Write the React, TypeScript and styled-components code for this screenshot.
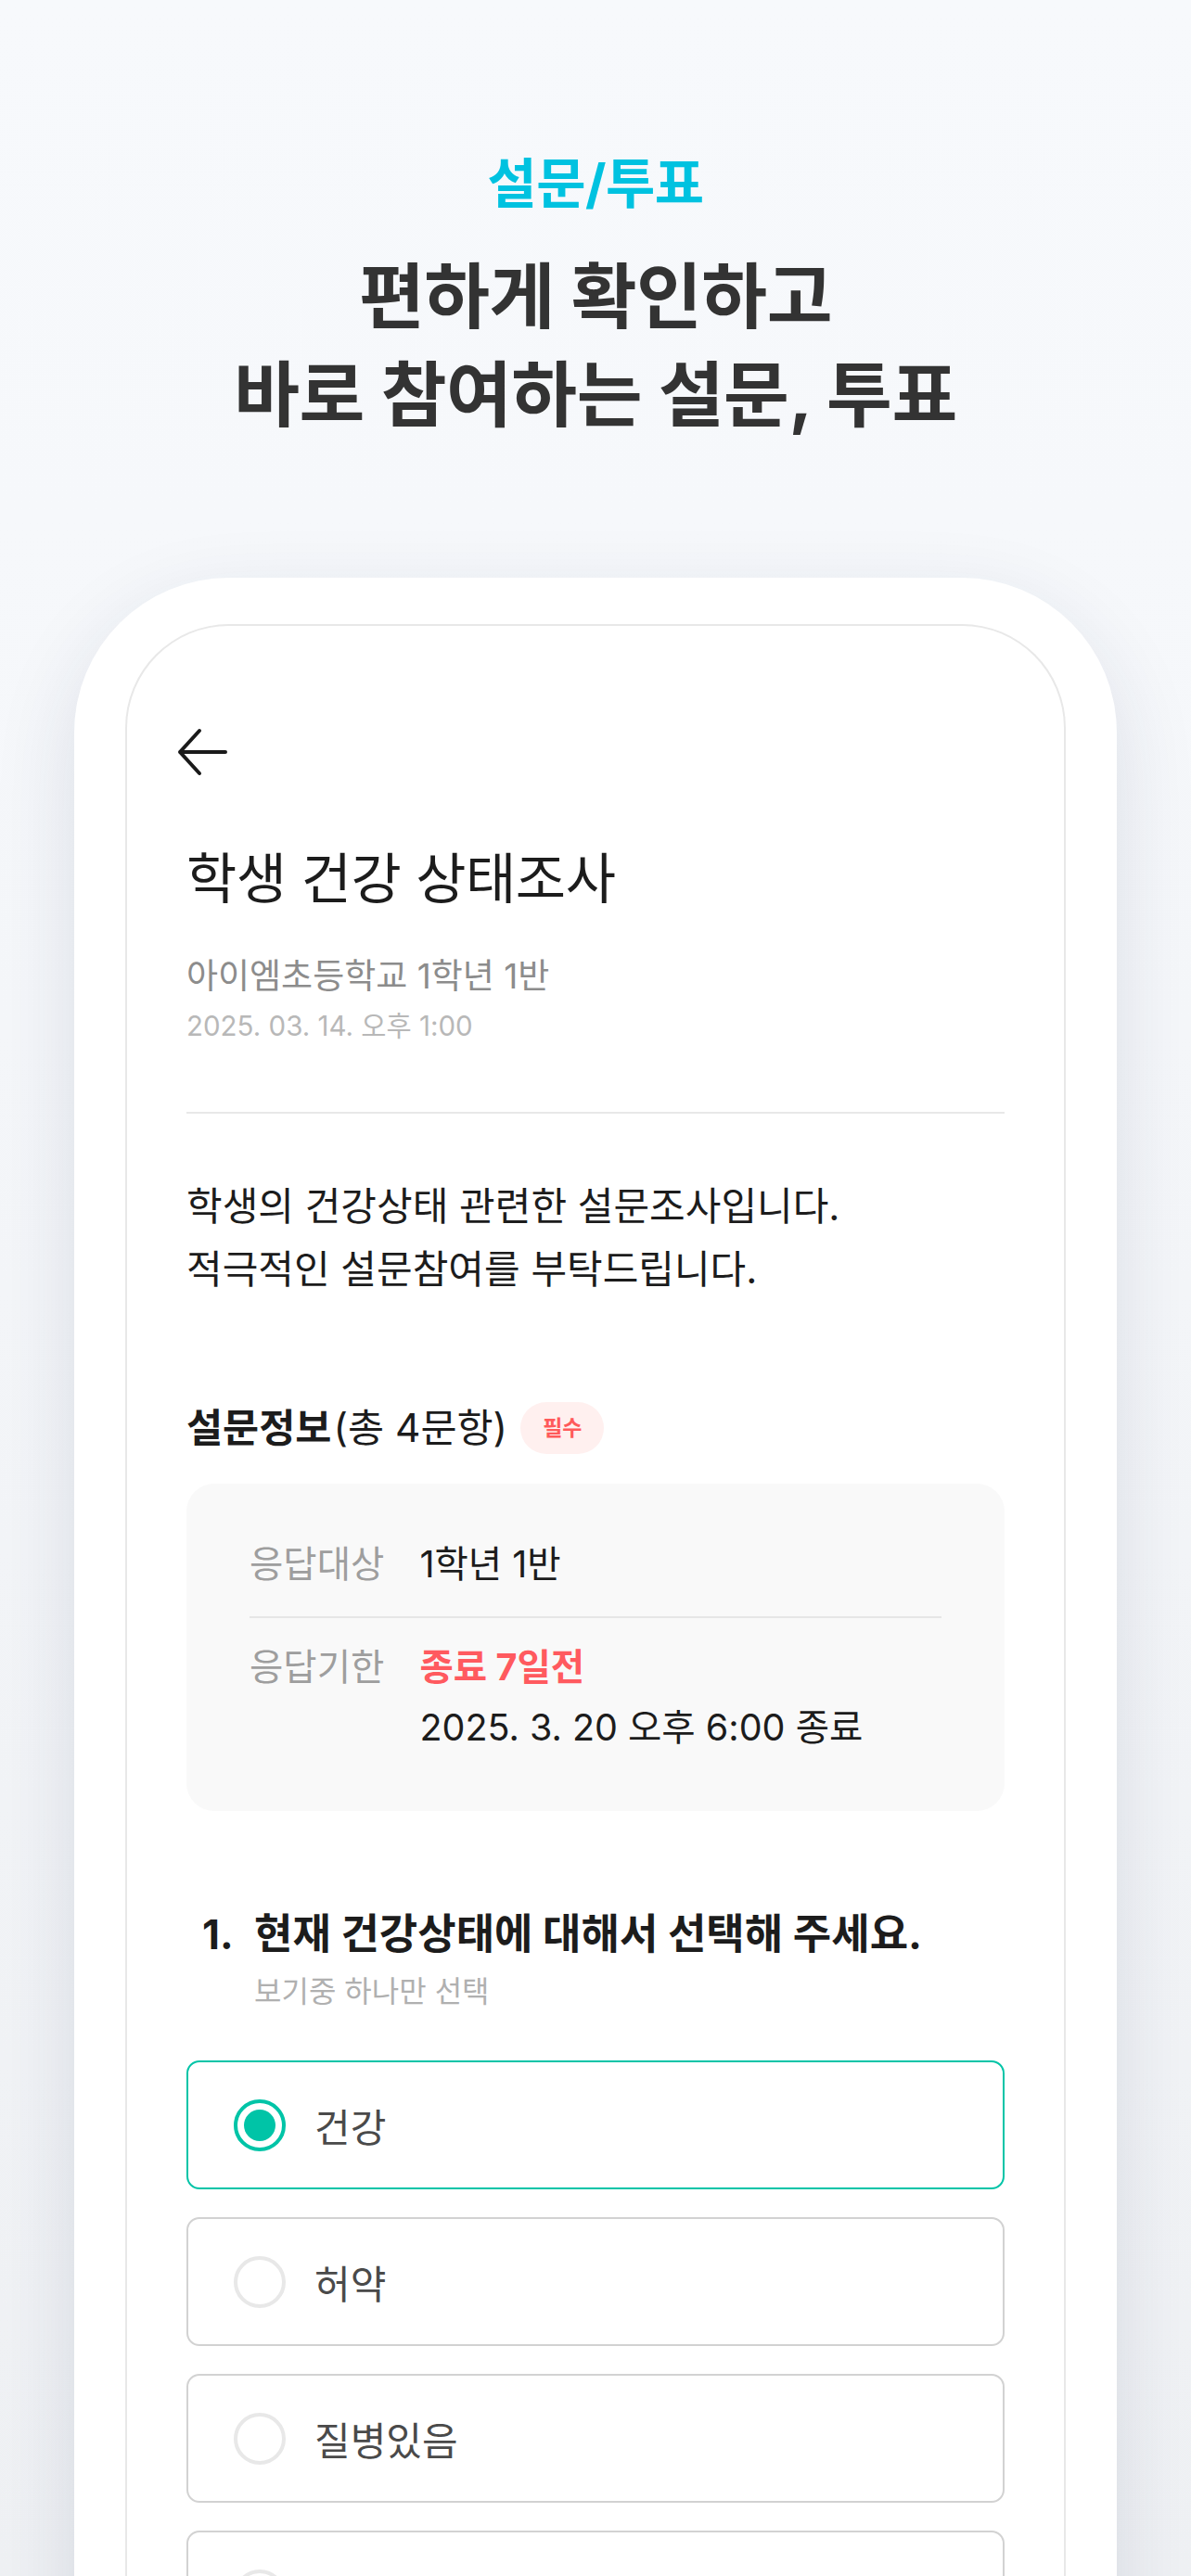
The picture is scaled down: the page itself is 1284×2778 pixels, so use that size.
import * as React from 'react';
import styled, { createGlobalStyle } from 'styled-components';

const GlobalStyle = createGlobalStyle`
  html, body {
    margin: 0;
    padding: 0;
  }
  body {
    background: #f7f9fc;
    font-family: Inter, "Noto Sans CJK KR", "Noto Sans", sans-serif;
    color: #1c1c1c;
    -webkit-font-smoothing: antialiased;
  }
`;

const Page = styled.div`
  height: 100vh;
  overflow: hidden;
  display: flex;
  flex-direction: column;
  align-items: center;
  padding-top: 162px;
  box-sizing: border-box;
  background: linear-gradient(180deg, #f7f9fc 0%, #f5f7fa 40%, #eff1f4 100%);
`;

const Eyebrow = styled.div`
  font-size: 58px;
  line-height: 72px;
  font-weight: 700;
  color: #00c2e0;
  letter-spacing: -0.5px;
`;

const Headline = styled.h1`
  margin: 33px 0 0;
  font-size: 77px;
  line-height: 106px;
  font-weight: 700;
  color: #333333;
  text-align: center;
  letter-spacing: -0.5px;
`;

const Phone = styled.div`
  margin-top: 144px;
  width: 1124px;
  flex: 1;
  display: flex;
  flex-direction: column;
  background: #ffffff;
  border-radius: 167px 167px 0 0;
  padding: 50px 55px 0;
  box-sizing: border-box;
  box-shadow: 0 30px 90px rgba(30, 40, 80, 0.12);
`;

const Screen = styled.div`
  flex: 1;
  border: 2px solid #e8e8e8;
  border-bottom: none;
  border-radius: 112px 112px 0 0;
  padding: 108px 64px 0;
  box-sizing: border-box;
`;

const BackButton = styled.button`
  display: block;
  width: 56px;
  height: 56px;
  margin-left: -12px;
  padding: 0;
  border: none;
  background: none;
`;

const Title = styled.h2`
  margin: 70px 0 0;
  font-size: 59px;
  line-height: 78px;
  font-weight: 400;
  color: #1c1c1c;
  letter-spacing: -0.5px;
`;

const School = styled.div`
  margin-top: 42px;
  font-size: 37px;
  line-height: 48px;
  color: #8c8c8c;
`;

const Posted = styled.div`
  margin-top: 9px;
  font-size: 29.5px;
  line-height: 40px;
  color: #b8b8b8;
`;

const Divider = styled.hr<{ $inset?: boolean }>`
  margin: ${(p) => (p.$inset ? '23px 0 21px' : '73px 0 0')};
  height: 2px;
  border: none;
  background: ${(p) => (p.$inset ? '#e6e6e6' : '#e8e8e8')};
`;

const Description = styled.p`
  margin: 66px 0 0;
  font-size: 42px;
  line-height: 68px;
  color: #1c1c1c;
`;

const SectionHead = styled.div`
  margin-top: 109px;
  height: 56px;
  display: flex;
  align-items: center;
  font-size: 42.5px;
  line-height: 56px;
`;

const SectionName = styled.span`
  font-weight: 700;
  color: #1c1c1c;
`;

const SectionCount = styled.span`
  color: #1c1c1c;
  margin-left: 2px;
`;

const Badge = styled.span`
  margin-left: 14px;
  height: 56px;
  padding: 0 24px;
  display: inline-flex;
  align-items: center;
  border-radius: 28px;
  background: #fff0ef;
  color: #ff5a5a;
  font-size: 23px;
  font-weight: 700;
`;

const InfoBox = styled.div`
  margin-top: 32px;
  padding: 55px 68px 57px;
  background: #f9f9f9;
  border-radius: 30px;
`;

const InfoRow = styled.div`
  display: flex;
  gap: 38px;
  font-size: 39.5px;
  line-height: 65px;
`;

const InfoLabel = styled.div`
  color: #9e9e9e;
  flex-shrink: 0;
`;

const InfoValue = styled.div<{ $alert?: boolean }>`
  color: ${(p) => (p.$alert ? '#ff5a5f' : '#1c1c1c')};
  font-weight: ${(p) => (p.$alert ? 700 : 400)};
`;

const Question = styled.div`
  margin-top: 105px;
  padding-left: 17px;
  display: flex;
`;

const QuestionNo = styled.div`
  width: 56px;
  font-size: 44px;
  line-height: 56px;
  font-weight: 700;
`;

const QuestionText = styled.div`
  font-size: 45px;
  line-height: 56px;
  font-weight: 700;
  color: #1c1c1c;
`;

const Hint = styled.div`
  margin-top: 14px;
  font-size: 32px;
  line-height: 40px;
  color: #b0b0b0;
`;

const Options = styled.div`
  margin-top: 54px;
  display: flex;
  flex-direction: column;
  gap: 30px;
`;

const Option = styled.label<{ $checked?: boolean }>`
  height: 139px;
  box-sizing: border-box;
  display: flex;
  align-items: center;
  gap: 31px;
  padding-left: 49px;
  border: 2px solid ${(p) => (p.$checked ? '#00c4a7' : '#d2d2d2')};
  border-radius: 14px;
  background: #ffffff;
`;

const Radio = styled.span<{ $checked?: boolean }>`
  width: 56px;
  height: 56px;
  box-sizing: border-box;
  border-radius: 50%;
  border: 4px solid ${(p) => (p.$checked ? '#00c4a7' : '#e8e8e8')};
  display: flex;
  align-items: center;
  justify-content: center;
  flex-shrink: 0;

  &::after {
    content: '';
    width: 34px;
    height: 34px;
    border-radius: 50%;
    background: ${(p) => (p.$checked ? '#00c4a7' : 'transparent')};
  }
`;

const OptionText = styled.span`
  font-size: 42px;
  color: #4a4a4a;
`;

const choices = ['건강', '허약', '질병있음', '기타'];

const App = () => (
  <Page>
    <GlobalStyle />
    <Eyebrow>설문/투표</Eyebrow>
    <Headline>
      편하게 확인하고
      <br />
      바로 참여하는 설문, 투표
    </Headline>
    <Phone>
      <Screen>
        <BackButton aria-label="뒤로">
          <svg width="56" height="56" viewBox="0 0 56 56" fill="none">
            <path
              d="M5 28H54M26 5L5 28L26 51"
              stroke="#1a1a1a"
              strokeWidth="4"
              strokeLinecap="round"
              strokeLinejoin="round"
            />
          </svg>
        </BackButton>
        <Title>학생 건강 상태조사</Title>
        <School>아이엠초등학교 1학년 1반</School>
        <Posted>2025. 03. 14. 오후 1:00</Posted>
        <Divider />
        <Description>
          학생의 건강상태 관련한 설문조사입니다.
          <br />
          적극적인 설문참여를 부탁드립니다.
        </Description>
        <SectionHead>
          <SectionName>설문정보</SectionName>
          <SectionCount>(총 4문항)</SectionCount>
          <Badge>필수</Badge>
        </SectionHead>
        <InfoBox>
          <InfoRow>
            <InfoLabel>응답대상</InfoLabel>
            <InfoValue>1학년 1반</InfoValue>
          </InfoRow>
          <Divider $inset />
          <InfoRow>
            <InfoLabel>응답기한</InfoLabel>
            <div>
              <InfoValue $alert>종료 7일전</InfoValue>
              <InfoValue>2025. 3. 20 오후 6:00 종료</InfoValue>
            </div>
          </InfoRow>
        </InfoBox>
        <Question>
          <QuestionNo>1.</QuestionNo>
          <div>
            <QuestionText>현재 건강상태에 대해서 선택해 주세요.</QuestionText>
            <Hint>보기중 하나만 선택</Hint>
          </div>
        </Question>
        <Options>
          {choices.map((c, i) => (
            <Option key={c} $checked={i === 0}>
              <Radio $checked={i === 0} />
              <OptionText>{c}</OptionText>
            </Option>
          ))}
        </Options>
      </Screen>
    </Phone>
  </Page>
);

export default App;
